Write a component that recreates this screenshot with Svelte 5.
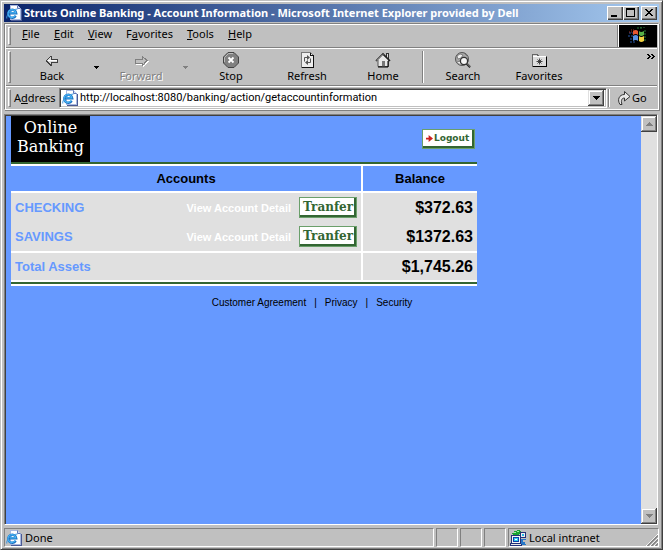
<script>
  const menus = [
    { pre: '', key: 'F', post: 'ile', w: 32 },
    { pre: '', key: 'E', post: 'dit', w: 34 },
    { pre: '', key: 'V', post: 'iew', w: 38 },
    { pre: 'F', key: 'a', post: 'vorites', w: 61 },
    { pre: '', key: 'T', post: 'ools', w: 41 },
    { pre: '', key: 'H', post: 'elp', w: 36 }
  ];
  const accounts = [
    { name: 'CHECKING', balance: '$372.63' },
    { name: 'SAVINGS', balance: '$1372.63' }
  ];
  let address = $state('http://localhost:8080/banking/action/getaccountinformation');
</script>

{#snippet ieIcon()}
  <svg class="ie" width="16" height="16" viewBox="0 0 16 16" aria-hidden="true">
    <path d="M5 15.500h10.500V4" fill="none" stroke="#4a5a94" shape-rendering="crispEdges" />
    <path d="M4.500 .5h7l3 3v11h-10z" fill="#fff" stroke="#a8b8e0" shape-rendering="crispEdges" />
    <path d="M11.500 .5v3h3" fill="#cfdcf8" stroke="#6078b8" />
    <path d="M9.700 10.800A4 4 0 1 1 10.200 8.300H3.500" fill="none" stroke="#1a70c0" stroke-width="2.400" />
    <path d="M9.400 10.300A3.900 3.900 0 1 1 9.800 7.900H4" fill="none" stroke="#48b4f4" stroke-width="1.200" />
    <path d="M.8 13.500C0 10 5 4.500 11.500 4" fill="none" stroke="#3a96e0" />
  </svg>
{/snippet}

{#snippet tool(label, icon, disabled = false)}
  <button class="tool" {disabled}>
    {@render icon()}
    <span>{label}</span>
  </button>
{/snippet}

{#snippet back()}
  <svg width="20" height="18" viewBox="0 0 20 18" shape-rendering="crispEdges" aria-hidden="true">
    <path d="M4 9h1V8h1V7h1V6h1V5h2v3h6v4h-6v3H8v-1H7v-1H6v-1H5v-1H4z" fill="#404040" />
    <path d="M5 9h1V8h1V7h1V6h1v3h6v2H9v2H8v-1H7v-1H6v-1H5z" fill="#d8d8d8" />
    <path d="M6 9h9v1H6z" fill="#fff" />
  </svg>
{/snippet}
{#snippet forward()}
  <svg width="20" height="18" viewBox="0 0 20 18" shape-rendering="crispEdges" aria-hidden="true">
    <path d="M17 10.500L12 6v3H5v4h7v3z" fill="none" stroke="#fff" />
    <path d="M16 9.500L11 5v3H4v4h7v3z" fill="#c0c0c0" stroke="#808080" />
  </svg>
{/snippet}
{#snippet stop()}
  <svg width="18" height="18" viewBox="0 0 18 18" aria-hidden="true">
    <path d="M6 1.500h6L16.500 6v6L12 16.500H6L1.500 12V6z" fill="#808080" stroke="#444" />
    <path d="M2.500 11V6.500L6.500 2.500H11" fill="none" stroke="#bbb" />
    <path d="M6.500 6.500l5 5M11.500 6.500l-5 5" stroke="#fff" stroke-width="1.800" />
  </svg>
{/snippet}
{#snippet refresh()}
  <svg width="18" height="18" viewBox="0 0 18 18" aria-hidden="true">
    <path d="M3.500 1.500h9l3 3v12h-12z" fill="#eee" stroke="#777" shape-rendering="crispEdges" />
    <path d="M12.500 1.500v3h3M15.500 5v11.500h-12" fill="none" stroke="#111" shape-rendering="crispEdges" />
    <path d="M6.500 10.500V6.500H9.500M12.500 7.500V11.500H9.500" fill="none" stroke="#555" />
    <path d="M9 4l3 2.500L9 9zM10 9l-3 2.500L10 14z" fill="#555" />
  </svg>
{/snippet}
{#snippet home()}
  <svg width="18" height="18" viewBox="0 0 18 18" aria-hidden="true">
    <path d="M12.500 6V2.500h2V8" fill="#ddd" stroke="#333" shape-rendering="crispEdges" />
    <path d="M4 8.500l5-5 5.500 5v7H4z" fill="#e8e8e8" stroke="#555" />
    <path d="M2 10l7-7 7 7" fill="none" stroke="#222" stroke-width="1.600" />
    <path d="M3 9.500l6-6" stroke="#fff" stroke-width=".8" />
    <path d="M8 10h3v6H8z" fill="#777" />
    <path d="M14 10v6H4" fill="none" stroke="#000" />
  </svg>
{/snippet}
{#snippet search()}
  <svg width="18" height="18" viewBox="0 0 18 18" aria-hidden="true">
    <circle cx="8" cy="8" r="6.500" fill="#a8a8a8" stroke="#555" />
    <path d="M3 5l3-2 3 1-2 3-3 1zM3 11l3-1 2 4M10 2l3 3" fill="#eee" stroke="#666" stroke-width=".7" />
    <circle cx="10" cy="10" r="3.600" fill="#f4f4f4" stroke="#333" stroke-width="1.300" />
    <path d="M12.700 12.700l3.500 3.500" stroke="#222" stroke-width="2.200" />
    <path d="M13 12.500l3.500 3.500" stroke="#bbb" stroke-width=".7" />
  </svg>
{/snippet}
{#snippet favorites()}
  <svg width="18" height="18" viewBox="0 0 18 18" aria-hidden="true">
    <g shape-rendering="crispEdges">
      <path d="M2.500 15.500v-12h5l1 2h8v10z" fill="#ddd" stroke="#666" />
      <path d="M3 5.500h13" stroke="#fff" />
      <path d="M16.500 6v9.500h-14" fill="none" stroke="#000" />
    </g>
    <path d="M9.500 7.500v6M6.500 10.500h6M7.500 8.500l4 4M11.500 8.500l-4 4" stroke="#333" stroke-width=".9" />
  </svg>
{/snippet}

<div class="window">
  <header class="title">
    {@render ieIcon()}
    <h1>Struts Online Banking - Account Information - Microsoft Internet Explorer provided by Dell</h1>
    <button class="cap" aria-label="Minimize">
      <svg width="12" height="10" shape-rendering="crispEdges"><path d="M2 7h6v2H2z" /></svg>
    </button>
    <button class="cap" aria-label="Maximize">
      <svg width="12" height="10" shape-rendering="crispEdges"><path d="M1 0h9v9H1zM2 2v6h7V2z" fill-rule="evenodd" /></svg>
    </button>
    <button class="cap close" aria-label="Close">
      <svg width="12" height="10" shape-rendering="crispEdges"><path d="M2 1h2v1h1v1h2V2h1V1h2v1H9v1H8v1H7v1h1v1h1v1h1v1H8V7H7V6H5v1H4v1H2V7h1V6h1V5h1V4H4V3H3V2H2z" /></svg>
    </button>
  </header>

  <div class="rebar">
    <nav class="band menu">
      <i class="grip"></i>
      {#each menus as m}
        <button style="width: {m.w}px">{m.pre}<u>{m.key}</u>{m.post}</button>
      {/each}
      <div class="throbber">
        <svg width="20" height="18" viewBox="0 0 20 18" aria-hidden="true">
          <path d="M1 6h4M0 9h5M2 12h4M2 15h5" stroke="#2858a8" stroke-dasharray="2 1" />
          <path d="M3 3h4M1 5h3" stroke="#a03020" stroke-dasharray="1 1" />
          <path d="M9 1h6M12 0h5M17 3v12" stroke="#287838" stroke-dasharray="2 1" />
          <path d="M5 4q3-2 5 0v4q-2-2-5 0z" fill="#e85830" />
          <path d="M11 4q2 2 5 0v4q-3 2-5 0z" fill="#58b048" />
          <path d="M5 9q3-2 5 0v5q-2-2-5 0z" fill="#5890e0" />
          <path d="M11 9q2 2 5 0v5q-3 2-5 0z" fill="#f0d040" />
        </svg>
      </div>
    </nav>

    <div class="band tools">
      <i class="grip"></i>
      {@render tool('Back', back)}
      <button class="drop" aria-label="Back history"><svg width="5" height="3" shape-rendering="crispEdges"><path d="M0 0h5v1H4v1H3v1H2V2H1V1H0z" /></svg></button>
      {@render tool('Forward', forward, true)}
      <button class="drop off" aria-label="Forward history" disabled><svg width="5" height="3" shape-rendering="crispEdges"><path d="M0 0h5v1H4v1H3v1H2V2H1V1H0z" fill="#808080" /></svg></button>
      {@render tool('Stop', stop)}
      {@render tool('Refresh', refresh)}
      {@render tool('Home', home)}
      <i class="sep"></i>
      {@render tool('Search', search)}
      {@render tool('Favorites', favorites)}
      <button class="more" aria-label="More tools">
        <svg width="8" height="5" shape-rendering="crispEdges"><path d="M0 0h2v1h1v1h1v1H3v1H2v1H0V4h1V3h1V2H1V1H0zM4 0h2v1h1v1h1v1H7v1H6v1H4V4h1V3h1V2H5V1H4z" /></svg>
      </button>
    </div>

    <div class="band addr">
      <i class="grip"></i>
      <label for="url">A<u>d</u>dress</label>
      <div class="combo">
        {@render ieIcon()}
        <input id="url" type="text" bind:value={address} spellcheck="false" />
        <button class="raised" aria-label="Show addresses"><svg width="7" height="4" shape-rendering="crispEdges"><path d="M0 0h7v1H6v1H5v1H4v1H3V3H2V2H1V1H0z" /></svg></button>
      </div>
      <i class="sep"></i>
      <button class="go">
        <svg width="14" height="16" viewBox="0 0 14 16" aria-hidden="true">
          <path d="M3 14.500C0 10 2 4.500 7.500 4.500V1.500L13 6.500 7.500 11V8C5 8 3.500 10 5 14.500z" fill="#e8e8e8" stroke="#333" />
        </svg>
        <span>Go</span>
      </button>
    </div>
  </div>

  <div class="view">
    <main>
      <div class="page">
        <div class="head">
          <div class="logo">Online<br />Banking</div>
          <button class="green logout">
            <svg width="7" height="7" viewBox="0 0 8 8" aria-hidden="true"><path d="M0 3h3V0l5 4-5 4V5H0z" fill="#cc2020" /></svg>
            <span>Logout</span>
          </button>
        </div>
        <table>
          <thead>
            <tr><th>Accounts</th><th class="amount">Balance</th></tr>
          </thead>
          <tbody>
            {#each accounts as a}
              <tr>
                <td>
                  <div class="account">
                    <span class="name">{a.name}</span>
                    <a href="#detail">View Account Detail</a>
                    <button class="green transfer">Tranfer</button>
                  </div>
                </td>
                <td class="amount">{a.balance}</td>
              </tr>
            {/each}
          </tbody>
          <tfoot>
            <tr><td><span class="name">Total Assets</span></td><td class="amount">$1,745.26</td></tr>
          </tfoot>
        </table>
        <footer>
          <a href="#agreement">Customer Agreement</a><i>|</i><a href="#privacy">Privacy</a><i>|</i><a href="#security">Security</a>
        </footer>
      </div>
    </main>
    <div class="scroll">
      <button class="raised" aria-label="Scroll up"><svg width="7" height="4" shape-rendering="crispEdges"><path d="M3 0h1v1h1v1h1v1h1v1H0V3h1V2h1V1h1z" fill="#808080" /></svg></button>
      <button class="raised" aria-label="Scroll down"><svg width="7" height="4" shape-rendering="crispEdges"><path d="M0 0h7v1H6v1H5v1H4v1H3V3H2V2H1V1H0z" fill="#808080" /></svg></button>
    </div>
  </div>

  <div class="status">
    <div class="pane wide">{@render ieIcon()}<span>Done</span></div>
    <div class="pane"></div>
    <div class="pane"></div>
    <div class="pane"></div>
    <div class="pane zone">
      <svg width="16" height="16" viewBox="0 0 16 16" shape-rendering="crispEdges" aria-hidden="true">
        <path d="M2 3h2V1h3V0h3v1h1v3H9v1H3z" fill="#18a030" />
        <path d="M4 2h2v1H4zM7 1h2v1H7z" fill="#a0f0a0" />
        <path d="M10.500 2.500h5v5h-5z" fill="#eee" stroke="#223078" />
        <path d="M12 4h2v2h-2z" fill="#20b8e8" />
        <path d="M1.500 5.500h9v8h-9z" fill="#f4f4f4" stroke="#223078" />
        <path d="M3 7h6v5H3z" fill="#1040a8" />
        <path d="M4 8h4v3H4z" fill="#30d0f0" />
        <path d="M5 9h2v1H5z" fill="#fff" />
        <path d="M0 13h12v3H0z" fill="#223078" />
        <path d="M1 14h10v1H1z" fill="#e8e8e8" />
        <path d="M11 9h5v1h-3v2h2v2h1v1h-4v-1h-1z" fill="#2878c8" />
      </svg>
      <span>Local intranet</span>
      <svg class="size" width="12" height="12" aria-hidden="true">
        <path d="M0 12L12 0M4 12l8-8M8 12l4-4" stroke="#fff" />
        <path d="M1.500 12L12 1.500M5.500 12L12 5.500M9.500 12L12 9.500" stroke="#808080" stroke-width="1.500" />
      </svg>
    </div>
  </div>
</div>

<style>
  :global(body) {
    margin: 0;
    background: #c0c0c0;
  }
  .window, .window * {
    box-sizing: border-box;
  }
  .window {
    display: flex;
    flex-direction: column;
    height: 100vh;
    min-height: 360px;
    padding: 2px;
    background: #c0c0c0;
    border: 1px solid;
    border-color: #c0c0c0 #404040 #404040 #c0c0c0;
    box-shadow: inset 1px 1px #fff, inset -1px -1px #808080;
    font: 11px/14px "Noto Sans", sans-serif;
    color: #000;
    overflow: hidden;
  }
  button, input {
    margin: 0;
    padding: 0;
    border: 0;
    background: none;
    font: inherit;
    color: inherit;
  }
  svg {
    flex: none;
    display: block;
  }
  i {
    font-style: normal;
  }
  u {
    text-underline-offset: 1px;
  }

  .title {
    display: flex;
    align-items: center;
    height: 18px;
    margin: 1px 1px 0;
    padding: 0 2px;
    background: linear-gradient(90deg, #0a246a, #a6caf0);
    color: #fff;
  }
  h1 {
    flex: 1;
    min-width: 0;
    margin: 0 0 0 2px;
    overflow: hidden;
    white-space: nowrap;
    font: bold 11px/16px "Noto Sans", sans-serif;
  }
  .cap {
    display: flex;
    width: 16px;
    height: 14px;
    padding: 2px;
    background: #c0c0c0;
    box-shadow: inset 1px 1px #fff, inset -1px -1px #404040, inset -2px -2px #808080;
  }
  .close {
    margin-left: 2px;
  }

  .rebar {
    margin: 1px 1px 0;
    border: 1px solid #808080;
    border-color: #808080 #fff #fff #808080;
    box-shadow: inset 1px 1px #fff, 1px 1px #808080;
    padding: 1px 1px 0;
  }
  .band {
    display: flex;
    align-items: center;
  }
  .grip {
    flex: none;
    align-self: stretch;
    width: 3px;
    margin: 2px 0 2px 2px;
    border: 1px solid;
    border-color: #fff #808080 #808080 #fff;
  }
  .menu {
    height: 22px;
  }
  .menu button {
    height: 20px;
    padding-bottom: 4px;
    text-align: left;
    white-space: nowrap;
  }
  .menu .grip {
    margin-right: 11px;
  }
  .throbber {
    display: flex;
    align-items: center;
    justify-content: center;
    width: 38px;
    height: 22px;
    margin-left: auto;
    background: #000;
    box-shadow: -1px 0 #fff, -2px 0 #808080;
  }
  .tools, .addr {
    border-top: 1px solid #808080;
    box-shadow: inset 0 1px #fff;
  }
  .tools {
    height: 38px;
    padding-top: 1px;
  }
  .tools .grip {
    margin-right: 4px;
  }
  .tool {
    display: flex;
    flex-direction: column;
    align-items: center;
    flex: none;
    width: 76px;
  }
  .tool:has(+ .drop) {
    width: 74px;
  }
  .tool:disabled {
    color: #808080;
    text-shadow: 1px 1px #fff;
  }
  .drop {
    display: flex;
    justify-content: center;
    width: 15px;
  }
  .sep {
    flex: none;
    align-self: stretch;
    width: 2px;
    margin: 2px 1px;
    border-left: 1px solid #808080;
    border-right: 1px solid #fff;
  }
  .more {
    align-self: flex-start;
    margin: 5px 2px 0 auto;
  }
  .addr {
    height: 24px;
    padding-top: 1px;
  }
  .addr label {
    width: 45px;
    margin-left: 3px;
  }
  .combo {
    display: flex;
    align-items: center;
    flex: 1;
    min-width: 0;
    height: 20px;
    padding: 2px;
    background: #fff;
    border: 1px solid;
    border-color: #808080 #fff #fff #808080;
    box-shadow: inset 1px 1px #404040, inset -1px -1px #c0c0c0;
  }
  .combo input {
    flex: 1;
    min-width: 0;
    margin-left: 2px;
    outline: 0;
    font-family: Roboto, sans-serif;
  }
  .raised {
    display: flex;
    align-items: center;
    justify-content: center;
    flex: none;
    width: 16px;
    height: 16px;
    background: #c0c0c0;
    box-shadow: inset -1px -1px #404040, inset 1px 1px #e0e0e0, inset -2px -2px #808080, inset 2px 2px #fff;
  }
  .go {
    display: flex;
    align-items: center;
    gap: 1px;
    width: 46px;
    padding-left: 6px;
  }

  .view {
    display: flex;
    flex: 1;
    min-height: 0;
    margin: 4px 2px 0 1px;
    border: 1px solid;
    border-color: #808080 #fff #fff #808080;
    background: #69f;
  }
  main {
    flex: 1;
    min-width: 0;
    padding: 0 5px;
    overflow: hidden;
    border-top: 1px solid #404040;
    border-left: 1px solid #404040;
  }
  .scroll {
    display: flex;
    flex-direction: column;
    justify-content: space-between;
    width: 16px;
    background: #e0e0e0;
    border-top: 1px solid #404040;
  }
  .page {
    max-width: 466px;
    font-family: "Liberation Sans", Arial, sans-serif;
  }
  .head {
    display: flex;
    justify-content: space-between;
    align-items: center;
    height: 50px;
    border-bottom: 2px solid #fff;
    box-shadow: inset 0 -2px #363;
    padding: 0 2px 2px 0;
  }
  .logo {
    width: 79px;
    height: 46px;
    padding-top: 2px;
    background: #000;
    color: #fff;
    text-align: center;
    font: 16px/19px "DejaVu Serif", serif;
  }
  .green {
    background: #fff;
    border: 1px solid #6a9f6a;
    box-shadow: inset -2px -2px #363;
    color: #363;
  }
  .logout {
    display: flex;
    align-items: center;
    gap: 1px;
    width: 53px;
    height: 20px;
    padding: 0 0 2px 3px;
    font: bold 9px/12px "DejaVu Sans", sans-serif;
  }
  table {
    width: 100%;
    table-layout: fixed;
    border-spacing: 0;
    border-bottom: 2px solid #fff;
    box-shadow: inset 0 -2px #363;
    padding-bottom: 2px;
  }
  th, td {
    padding: 0 4px;
    vertical-align: middle;
  }
  th {
    height: 27px;
    border-bottom: 2px solid #fff;
    font-size: 13px;
    line-height: 16px;
  }
  td {
    height: 29px;
    background: #e0e0e0;
  }
  .amount {
    width: 116px;
    border-left: 2px solid #fff;
  }
  td.amount {
    text-align: right;
    font: bold 16px/18px "Liberation Sans", Arial, sans-serif;
  }
  tfoot td {
    height: 31px;
    border-top: 2px solid #fff;
    border-bottom: 2px solid #fff;
  }
  .account {
    display: flex;
    align-items: center;
  }
  .name {
    color: #69f;
    font-size: 13px;
    font-weight: bold;
    line-height: 16px;
  }
  .account a {
    margin: 0 8px 0 auto;
    color: #fff;
    font-weight: bold;
    text-decoration: none;
  }
  .transfer {
    width: 58px;
    height: 21px;
    font: bold 12px/16px "DejaVu Serif", serif;
    padding-bottom: 2px;
  }
  footer {
    display: flex;
    justify-content: center;
    gap: 8px;
    padding: 10px 0 0 136px;
    font-size: 10px;
    white-space: nowrap;
  }
  footer a {
    color: #000;
    text-decoration: none;
  }

  .status {
    display: flex;
    gap: 2px;
    height: 19px;
    margin: 3px 1px 0;
  }
  .pane {
    display: flex;
    align-items: center;
    width: 22px;
    padding-left: 1px;
    border: 1px solid;
    border-color: #808080 #fff #fff #808080;
  }
  .pane span {
    margin-left: 3px;
  }
  .wide {
    flex: 1;
  }
  .zone {
    width: 151px;
  }
  .size {
    margin: 4px 0 0 auto;
  }
</style>
